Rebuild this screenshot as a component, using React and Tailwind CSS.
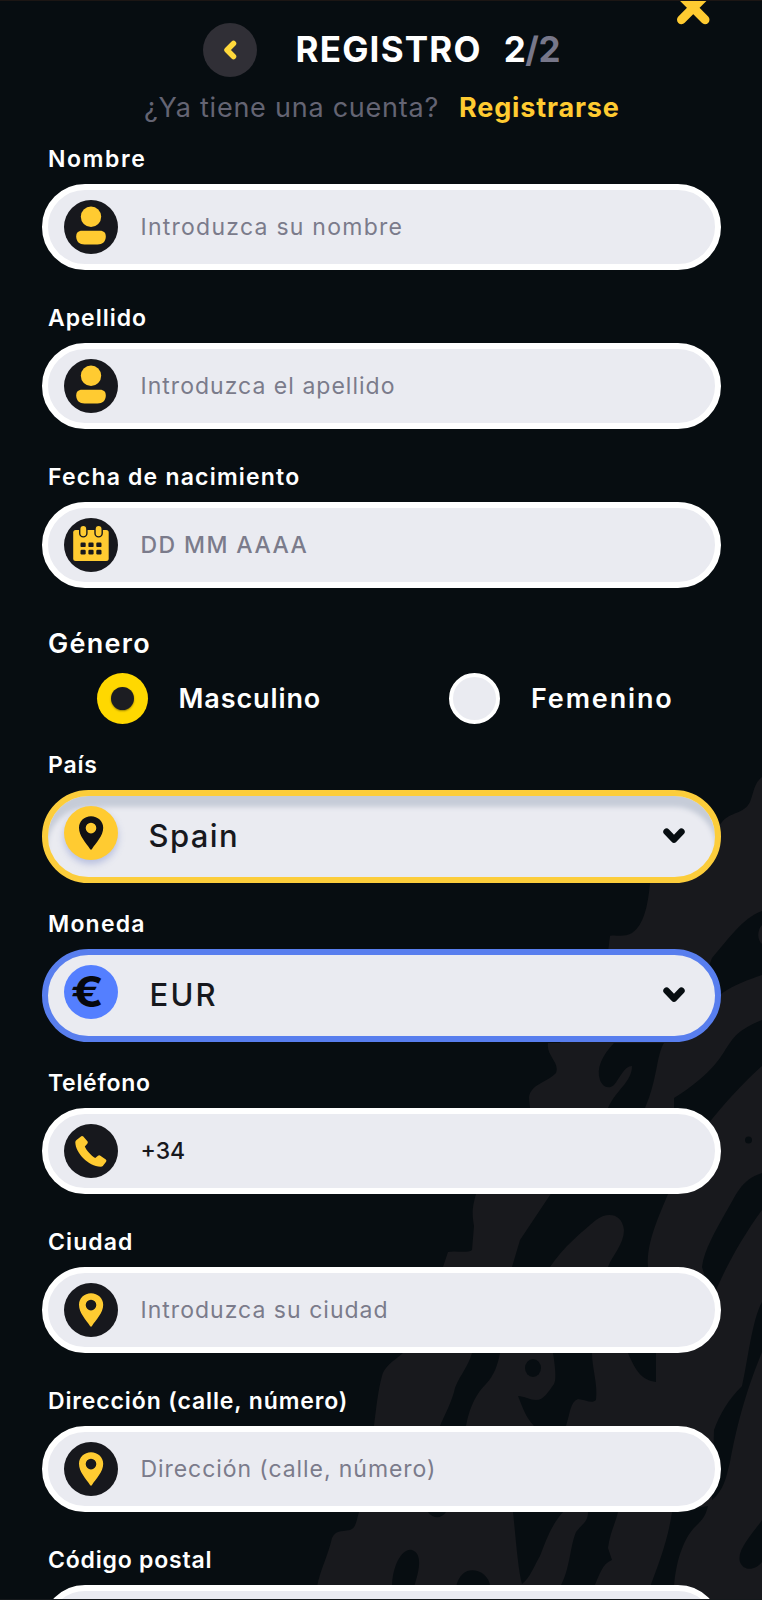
import React, { useState } from 'react';

const ART = [
  'M762 777 C754 783 754 792 750 802 C744 814 730 812 722 822 L700 850 L650 883 C648 905 644 925 632 933 C624 938 612 934 610 936 L607 960 L560 1043 L548 1043 C546 1056 560 1062 556 1073 C548 1082 530 1084 529 1098 L530 1108 L476 1194 C472 1208 472 1214 474 1226 L472 1250 C466 1254 456 1250 448 1252 L443 1267 L403 1353 C392 1362 384 1367 382 1376 C378 1390 376 1410 374 1426 L359 1512 C356 1522 356 1528 350 1530 C340 1532 336 1530 332 1538 C328 1556 320 1570 317 1587 L317 1600 L762 1600 Z',
];

const CUTS = [
  'M762 911 C742 918 728 940 712 958 L700 990 L721 994 C735 984 748 980 762 975 Z',
  'M614 1043 C602 1056 596 1068 600 1080 C602 1086 608 1090 614 1085 C620 1078 624 1066 632 1066 C632 1082 616 1090 608 1108 L520 1240 L512 1267 L550 1267 C564 1246 582 1232 596 1220 C606 1212 622 1212 624 1230 C624 1244 612 1256 608 1267 L648 1267 C646 1242 660 1214 668 1194 L645 1108 C658 1078 656 1056 664 1043 Z',
  'M762 1020 C738 1030 734 1036 724 1052 C712 1072 690 1088 674 1098 L674 1108 L708 1124 C724 1104 742 1084 762 1066 Z',
  'M762 1173 C740 1180 736 1196 726 1212 C716 1230 704 1250 702 1267 L712 1300 C722 1274 740 1240 762 1210 Z',
  'M762 1302 C752 1320 748 1360 742 1386 C728 1400 720 1414 714 1430 L712 1500 C724 1490 726 1478 730 1462 C736 1430 744 1396 762 1352 Z',
  'M472 1353 C468 1368 456 1380 454 1392 C450 1406 444 1416 440 1426 L466 1426 C470 1404 478 1392 486 1384 C494 1376 498 1364 500 1353 Z',
  'M553 1353 C556 1372 556 1380 554 1384 C548 1392 544 1400 536 1400 C530 1400 524 1396 518 1396 C522 1406 526 1418 534 1426 L566 1426 C570 1414 570 1402 578 1399 C586 1400 592 1404 596 1400 C598 1384 592 1368 592 1353 Z',
  'M628 1353 C636 1372 642 1380 656 1382 L656 1353 Z',
  'M513 1512 C516 1540 518 1570 522 1584 C530 1578 534 1566 540 1556 C546 1540 552 1524 563 1512 Z',
  'M588 1512 C588 1522 582 1524 576 1532 C570 1546 570 1570 560 1587 L594 1587 C600 1574 602 1564 612 1560 L608 1548 C610 1532 616 1522 618 1512 Z',
  'M672 1512 C668 1540 658 1566 650 1587 L674 1587 C676 1560 684 1536 698 1524 C704 1518 706 1514 708 1506 Z',
  'M762 1520 C754 1532 736 1550 740 1562 C744 1572 756 1570 762 1562 Z',
  'M392 1587 C392 1566 402 1548 412 1550 C424 1554 418 1574 414 1587 Z',
  'M456 1587 C460 1568 474 1568 482 1573 C488 1578 490 1582 490 1587 Z',
  'M428 1512 C434 1520 442 1518 446 1512 Z',
];

const Backdrop = () => (
  <svg className="absolute -top-px left-0 -z-10" width="762" height="1600" viewBox="0 0 762 1600" aria-hidden="true">
    {ART.map((d, i) => <path key={i} d={d} fill="#18191d" />)}
    {CUTS.map((d, i) => <path key={i} d={d} fill="#070d11" />)}
    <ellipse cx="533" cy="1368" rx="8" ry="9" fill="#070d11" />
    <circle cx="748.5" cy="1140" r="3.5" fill="#070d11" />
    <path d="M762 925 C757 930 757 940 762 944 Z" fill="#18191d" />
  </svg>
);

const UserGlyph = () => (
  <>
    <circle cx="27" cy="16.8" r="10.2" />
    <path d="M18 30.8 H36 C40 30.8 41.8 33 41.8 36.5 C41.8 41.5 38.5 44.5 33.5 44.5 H20.5 C15.5 44.5 12.2 41.5 12.2 36.5 C12.2 33 14 30.8 18 30.8 Z" />
  </>
);

const CalendarGlyph = () => (
  <>
    <rect x="9.2" y="12" width="35.5" height="31" rx="2.5" />
    <g stroke="#17181d" strokeWidth="1.4">
      <rect x="15.7" y="7.3" width="7.2" height="11.6" rx="3.6" />
      <rect x="31" y="7.3" width="7.2" height="11.6" rx="3.6" />
    </g>
    <g fill="#17181d">
      <rect x="16.5" y="24.5" width="5.2" height="4.6" rx="1.2" />
      <rect x="24.4" y="24.5" width="5.2" height="4.6" rx="1.2" />
      <rect x="32.3" y="24.5" width="5.2" height="4.6" rx="1.2" />
      <rect x="16.5" y="31.8" width="5.2" height="4.6" rx="1.2" />
      <rect x="24.4" y="31.8" width="5.2" height="4.6" rx="1.2" />
      <rect x="32.3" y="31.8" width="5.2" height="4.6" rx="1.2" />
    </g>
  </>
);

const PinGlyph = () => (
  <path fillRule="evenodd" d="M27 10.3 C20.2 10.3 15 15.3 15 21.7 C15 30 22 36.5 26 43 Q27 44.4 28 43 C32 36.5 39.2 30 39.2 21.7 C39.2 15.3 33.8 10.3 27 10.3 Z M27 16.8 A5.3 5.3 0 1 1 27 27.4 A5.3 5.3 0 1 1 27 16.8 Z" />
);

const PhoneGlyph = () => (
  <path d="M12.5 16 L17.3 12.3 Q18.4 11.7 19.3 12.6 L23.6 17.6 Q24.2 18.7 23.3 19.7 L20.8 22.5 C22.5 26.5 27 31.5 31.2 34 L34 31.7 Q35 31 36 31.6 L41.8 35.5 Q42.9 36.5 42.1 37.7 L38.8 42 Q38 42.9 36.7 42.8 C24 42 11.6 29 11.3 18.2 Q11.3 17 12.5 16 Z" />
);

const Badge = ({ children }) => (
  <svg className="size-[54px] shrink-0 rounded-full bg-[#17181d]" viewBox="0 0 54 54" fill="#ffcb31">
    {children}
  </svg>
);

const Chevron = () => (
  <svg className="mr-[30px] ml-auto h-[16px] w-[22px]" viewBox="0 0 22 16" fill="none" stroke="#070d11" strokeWidth="6.6" strokeLinecap="round" strokeLinejoin="round">
    <path d="M3.6 3.7 L11 11.6 L18.4 3.7" />
  </svg>
);

const Label = ({ tracking, children }) => (
  <label className={`mb-[10px] ml-[6px] block h-[30px] text-[23px] leading-[30px] font-semibold whitespace-nowrap text-white ${tracking}`}>
    {children}
  </label>
);

const Field = ({ label, tracking, icon, children }) => (
  <div className="h-[159.1px] shrink-0">
    <Label tracking={tracking}>{label}</Label>
    <div className="flex h-[86px] items-center rounded-full border-6 border-white bg-[#eaebf1] pl-[15.5px]">
      <Badge>{icon}</Badge>
      {children}
    </div>
  </div>
);

const Placeholder = ({ className, children }) => (
  <span className={`ml-[23px] text-[23px] leading-[30px] whitespace-nowrap ${className}`}>{children}</span>
);

const Radio = ({ checked, onClick, className, children }) => (
  <button type="button" onClick={onClick} className={`flex items-center text-[27px] font-semibold text-white ${className}`}>
    {checked ? (
      <span className="mr-[31px] flex size-[51px] items-center justify-center rounded-full bg-[#ffd800]">
        <span className="size-[23px] rounded-full bg-[#1c1d22] shadow-[0_1px_2px_rgba(0,0,0,0.4)]" />
      </span>
    ) : (
      <span className="mr-[31px] size-[51px] rounded-full border-4 border-white bg-[#eaebf1]" />
    )}
    {children}
  </button>
);

const App = () => {
  const [gender, setGender] = useState('m');

  return (
    <div className="relative isolate flex h-[1600px] w-[762px] flex-col overflow-hidden border-t border-b border-t-[#1c1614] border-b-[#15191c] bg-[#070d11] font-['Inter','Liberation_Sans',sans-serif]">
      <Backdrop />
      <svg className="absolute top-0 right-[52px]" width="34" height="25" viewBox="0 1 34 25" fill="none" stroke="#ffcb31" strokeWidth="9" strokeLinecap="round">
        <path d="M5.5 -4 L29 19.7 M29 -4 L5.5 19.7" />
      </svg>

      <header className="mt-[21px] flex h-[55px] shrink-0 items-center pl-[202.5px]">
        <button type="button" className="flex size-[54px] items-center justify-center rounded-full bg-[#302f36]">
          <svg width="14" height="20" viewBox="0 0 14 20" fill="none" stroke="#ffd93b" strokeWidth="5.5" strokeLinecap="round" strokeLinejoin="round">
            <path d="M10.5 3.5 L4 10 L10.5 16.5" />
          </svg>
        </button>
        <h1 className="ml-[39px] text-[35px] font-bold tracking-[1.2px] text-white">REGISTRO</h1>
        <span className="ml-[22px] text-[35px] font-bold tracking-[-0.4px] text-white">2<span className="text-[#77778a]">/2</span></span>
      </header>

      <p className="mt-[16px] flex h-[30px] shrink-0 items-center pl-[144px] text-[27px]">
        <span className="tracking-[0.76px] text-[#646473]">¿Ya tiene una cuenta?</span>
        <a href="#" className="ml-[20px] font-bold tracking-[0.84px] text-[#ffcb31]">Registrarse</a>
      </p>

      <form className="mr-[41px] ml-[42px] mt-[21px] flex flex-col">
        <Field label="Nombre" tracking="tracking-[1.6px]" icon={<UserGlyph />}>
          <Placeholder className="tracking-[1.25px] text-[#7b7b8b]">Introduzca su nombre</Placeholder>
        </Field>
        <Field label="Apellido" tracking="tracking-[1px]" icon={<UserGlyph />}>
          <Placeholder className="tracking-[1.02px] text-[#7b7b8b]">Introduzca el apellido</Placeholder>
        </Field>
        <Field label="Fecha de nacimiento" tracking="tracking-[1.2px]" icon={<CalendarGlyph />}>
          <Placeholder className="font-medium tracking-[1.4px] text-[#7b7b8b]">DD MM AAAA</Placeholder>
        </Field>

        <div className="h-[128.4px] shrink-0 pt-[7px]">
          <div className="ml-[6px] h-[32px] text-[27px] leading-[32px] font-semibold tracking-[1.3px] text-white">Género</div>
          <div className="mt-[13px] flex h-[51px] items-center">
            <Radio checked={gender === 'm'} onClick={() => setGender('m')} className="ml-[54.5px] w-[352.5px] tracking-[0.9px]">Masculino</Radio>
            <Radio checked={gender === 'f'} onClick={() => setGender('f')} className="tracking-[1.85px]">Femenino</Radio>
          </div>
        </div>

        <div className="h-[159.1px] shrink-0">
          <Label tracking="tracking-[0.8px]">País</Label>
          <div className="flex h-[93px] items-center rounded-full border-6 border-[#fccd3b] bg-[#eaebf1] pl-[15.5px] shadow-[inset_0_12px_5px_-1px_#c6ccd8]">
            <svg className="mb-[7px] size-[54px] rounded-full bg-[#ffcb31] shadow-[0_4px_7px_rgba(90,110,190,0.35)]" viewBox="0 0 54 54" fill="#111115">
              <PinGlyph />
            </svg>
            <span className="ml-[31px] text-[31px] font-medium tracking-[1.4px] text-[#17181d]">Spain</span>
            <Chevron />
          </div>
        </div>

        <div className="h-[159.1px] shrink-0">
          <Label tracking="tracking-[1.2px]">Moneda</Label>
          <div className="flex h-[93px] items-center rounded-full border-6 border-[#587eee] bg-[#eaebf1] pl-[15.5px]">
            <span className="mb-[7px] flex size-[54px] items-center justify-center rounded-full bg-[#547fff] pr-[6px] text-[42px] font-bold text-[#06080d]">
              <span className="scale-x-115">€</span>
            </span>
            <span className="ml-[32px] text-[31px] font-medium tracking-[2.2px] text-[#17181d]">EUR</span>
            <Chevron />
          </div>
        </div>

        <Field label="Teléfono" tracking="tracking-[0.7px]" icon={<PhoneGlyph />}>
          <Placeholder className="font-medium text-[#17181d]">+34</Placeholder>
        </Field>
        <Field label="Ciudad" tracking="tracking-[1.1px]" icon={<PinGlyph />}>
          <Placeholder className="tracking-[1.02px] text-[#7b7b8b]">Introduzca su ciudad</Placeholder>
        </Field>
        <Field label="Dirección (calle, número)" tracking="tracking-[0.87px]" icon={<PinGlyph />}>
          <Placeholder className="tracking-[0.93px] text-[#7b7b8b]">Dirección (calle, número)</Placeholder>
        </Field>
        <Field label="Código postal" tracking="tracking-[0.8px]" icon={<PinGlyph />} />
      </form>
    </div>
  );
};

export default App;
